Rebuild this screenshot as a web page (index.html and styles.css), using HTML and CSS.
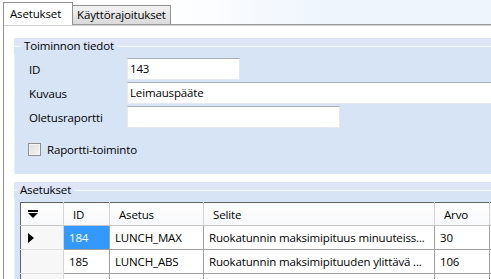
FILE: index.html
```html
<!DOCTYPE html>
<html lang="fi">
<head>
<meta charset="UTF-8">
<title>Toiminto - Asetukset</title>
<link rel="stylesheet" href="styles.css">
</head>
<body>
<div class="tabs">
  <div class="tab active">Asetukset</div>
  <div class="tab">Käyttörajoitukset</div>
</div>

<div class="page">
  <div class="group info">
    <div class="group-head"><span>Toiminnon tiedot</span></div>
    <div class="fields">
      <label>ID</label>
      <div class="textbox short">143</div>
      <label>Kuvaus</label>
      <div class="textbox wide">Leimauspääte</div>
      <label>Oletusraportti</label>
      <div class="textbox medium"></div>
    </div>
    <div class="check">
      <span class="box"></span>
      <span>Raportti-toiminto</span>
    </div>
  </div>

  <div class="group settings">
    <div class="group-head"><span>Asetukset</span></div>
    <div class="grid-wrap">
      <table class="grid">
        <colgroup>
          <col class="c-row">
          <col class="c-id">
          <col class="c-key">
          <col class="c-desc">
          <col class="c-val">
          <col class="c-more">
        </colgroup>
        <thead>
          <tr>
            <th class="rowhead">
              <svg width="10" height="8" viewBox="0 0 10 8"><rect x="0" y="0" width="10" height="2" fill="#000"/><polygon points="0,3 10,3 5,8" fill="#000"/></svg>
            </th>
            <th>ID</th>
            <th>Asetus</th>
            <th>Selite</th>
            <th>Arvo</th>
            <th></th>
          </tr>
        </thead>
        <tbody>
          <tr>
            <td class="rowhead">
              <svg width="6" height="10" viewBox="0 0 6 10"><polygon points="0,0 6,5 0,10" fill="#000"/></svg>
            </td>
            <td class="selected">184</td>
            <td>LUNCH_MAX</td>
            <td>Ruokatunnin maksimipituus minuuteiss...</td>
            <td>30</td>
            <td></td>
          </tr>
          <tr>
            <td class="rowhead"></td>
            <td>185</td>
            <td>LUNCH_ABS</td>
            <td>Ruokatunnin maksimipituuden ylittävä ...</td>
            <td>106</td>
            <td></td>
          </tr>
          <tr>
            <td class="rowhead"></td>
            <td></td>
            <td></td>
            <td></td>
            <td></td>
            <td></td>
          </tr>
        </tbody>
      </table>
    </div>
  </div>
</div>
</body>
</html>
```

FILE: styles.css
```css
body {
  margin: 0;
  width: 491px;
  height: 279px;
  overflow: hidden;
  background-color: #ffffff;
  font-family: 'Open Sans', sans-serif;
  font-size: 11.5px;
  letter-spacing: -0.15px;
  color: #000;
}

.tabs {
  display: flex;
  align-items: flex-end;
  height: 24px;
  padding-left: 3px;
  background: linear-gradient(to right, #ffffff 170px, #eef5fd 330px);
}

.tab {
  box-sizing: border-box;
  height: 19px;
  width: 98px;
  padding-left: 4px;
  line-height: 17px;
  border: 1px solid #8e9096;
  border-bottom: none;
  border-left: none;
  background: linear-gradient(#f3f3f3, #dadada);
  white-space: nowrap;
}

.tab.active {
  position: relative;
  z-index: 1;
  height: 23px;
  width: 70px;
  margin-bottom: -1px;
  padding-left: 6px;
  line-height: 22px;
  border-left: 1px solid #8e9096;
  background: #ffffff;
}

.page {
  width: 600px;
  height: 260px;
  margin-left: 3px;
  padding: 13px 0 0 10px;
  border-top: 1px solid #9a9a9a;
  border-left: 1px solid #8e9096;
  box-shadow: inset 0 1px 0 #d0d0d0;
}

.group {
  background-color: #d7e4f6;
  box-shadow: inset 1px 0 0 #eaf0fa;
}

.group-head {
  display: flex;
  align-items: center;
  height: 16px;
  background: linear-gradient(#dee6f8 8px, #d7e4f6 8px);
}

.group-head::before,
.group-head::after {
  content: "";
  border-top: 1px solid #f5f8fd;
}

.group-head::after {
  flex: 1;
}

.group-head span {
  padding: 0 3px;
  line-height: 14px;
}

.info {
  height: 136px;
}

.info .group-head::before {
  width: 7px;
}

.settings {
  margin-top: 8px;
  height: 120px;
}

.settings .group-head::before {
  width: 3px;
}

.fields {
  display: grid;
  grid-template-columns: 98px 1fr;
  row-gap: 2px;
  margin-top: 4px;
  padding-left: 15px;
}

.fields label {
  align-self: center;
}

.textbox {
  box-sizing: border-box;
  height: 22px;
  padding-left: 2px;
  line-height: 20px;
  background: #ffffff;
  border: 1px solid #e3e9ef;
  border-top-color: #abadb3;
}

.short {
  width: 113px;
}

.medium {
  width: 213px;
}

.wide {
  width: 420px;
}

.check {
  display: flex;
  align-items: center;
  gap: 6px;
  height: 16px;
  margin-top: 13px;
  padding-left: 14px;
}

.check .box {
  box-sizing: border-box;
  width: 13px;
  height: 13px;
  border: 1px solid #8f8f8f;
  background: linear-gradient(135deg, #dcdcdc, #f6f6f6);
  box-shadow: inset 0 0 0 1px #f4f4f4;
}

.grid-wrap {
  padding: 4px 0 0 6px;
}

.grid {
  border-collapse: collapse;
  table-layout: fixed;
  width: 539px;
  border-top: 1px solid #646464;
  border-left: 1px solid #646464;
}

.c-row { width: 43px; }
.c-id { width: 46px; }
.c-key { width: 94px; }
.c-desc { width: 231px; }
.c-val { width: 55px; }
.c-more { width: 70px; }

th, td {
  padding: 0 0 0 5px;
  text-align: left;
  font-weight: normal;
  white-space: nowrap;
  overflow: hidden;
}

th {
  height: 22px;
  padding-left: 9px;
  background: linear-gradient(#ffffff, #f7f8fa);
  border-right: 1px solid #d5d5d5;
  border-bottom: 1px solid #c5c5c5;
}

td {
  height: 23px;
  background: #ffffff;
  border-right: 1px solid #a0a0a0;
  border-bottom: 1px solid #a0a0a0;
}

.rowhead {
  padding-left: 7px;
  background: #f7f7f7;
  border-right: 1px solid #d5d5d5;
  border-bottom: 1px solid #e0e0e0;
}

th.rowhead {
  background: linear-gradient(#ffffff, #f7f8fa);
  border-bottom: 1px solid #c5c5c5;
}

.rowhead svg {
  display: block;
}

td.selected {
  background: #3399ff;
  color: #ffffff;
}
```
